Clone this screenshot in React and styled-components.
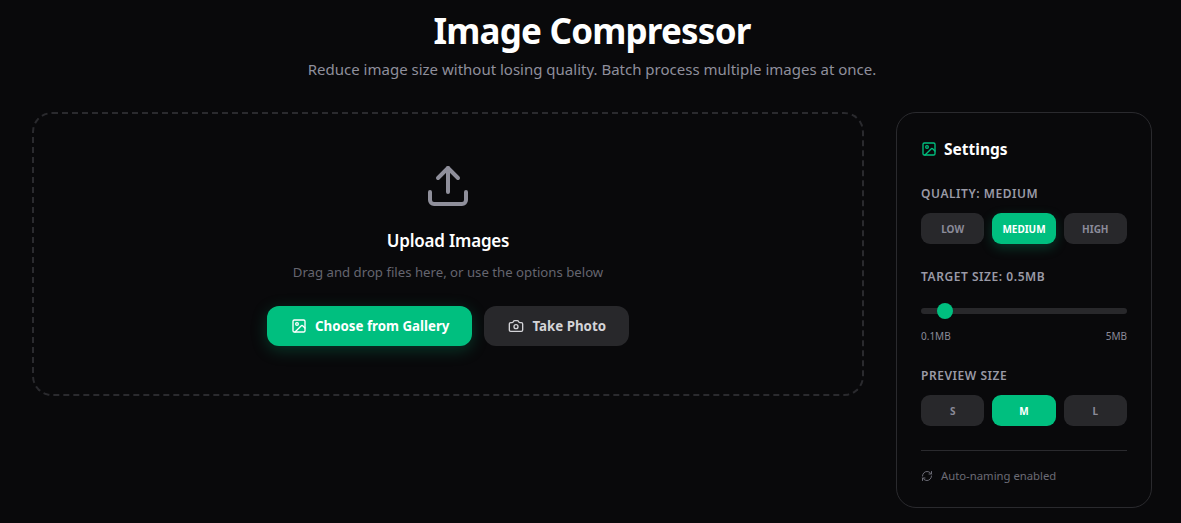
import styled, { createGlobalStyle } from "styled-components";
import { Camera, Image, RefreshCw, Upload } from "lucide-react";

const GREEN = "#00bf7f";

const GlobalStyle = createGlobalStyle`
  html, body {
    margin: 0;
    background: #09090b;
    color: #fff;
    font-family: "Noto Sans", "Open Sans", sans-serif;
  }

  * {
    box-sizing: border-box;
  }
`;

const Page = styled.div`
  width: 1181px;
  height: 523px;
  overflow: hidden;
  padding: 8px 29px 0 32px;
`;

const Header = styled.header`
  text-align: center;
  height: 104px;

  h1 {
    margin: 0;
    font-size: 35px;
    line-height: 46px;
    font-weight: 700;
    letter-spacing: -0.8px;
  }

  p {
    margin: 3px 0 0;
    font-size: 15px;
    line-height: 24px;
    color: #8f8f9c;
  }
`;

const Columns = styled.main`
  display: grid;
  grid-template-columns: 1fr 256px;
  gap: 32px;
  align-items: start;
`;

const DropZone = styled.section`
  height: 284px;
  border: 2px dashed #2a2a2e;
  border-radius: 20px;
  padding-top: 48px;
  display: flex;
  flex-direction: column;
  align-items: center;
  color: #8f8f9b;

  h2 {
    margin: 17px 0 0;
    font-size: 17px;
    line-height: 28px;
    font-weight: 600;
    letter-spacing: -0.2px;
    color: #fff;
  }

  p {
    margin: 7px 0 0;
    font-size: 13.2px;
    line-height: 20px;
    color: #65656f;
  }
`;

const Actions = styled.div`
  display: flex;
  gap: 12px;
  margin-top: 24px;
`;

const ActionButton = styled.button`
  height: 40px;
  display: flex;
  align-items: center;
  gap: 8px;
  padding: 0 23px 0 24px;
  border: none;
  border-radius: 12px;
  font-family: inherit;
  font-size: 13.3px;
  font-weight: 700;
  background: ${(p) => (p.$primary ? GREEN : "#28282b")};
  color: ${(p) => (p.$primary ? "#fff" : "#d4d4d8")};
  box-shadow: ${(p) => (p.$primary ? "0 4px 16px rgba(0, 191, 127, 0.25)" : "none")};
`;

const Panel = styled.aside`
  height: 396px;
  border: 1px solid #2a2a2e;
  border-radius: 20px;
  padding: 24px;
  display: flex;
  flex-direction: column;
`;

const PanelTitle = styled.h3`
  margin: 0;
  display: flex;
  align-items: center;
  gap: 7px;
  font-size: 15.5px;
  line-height: 24px;
  font-weight: 700;
  color: #fff;

  svg {
    color: ${GREEN};
  }
`;

const Label = styled.div`
  margin-top: ${(p) => p.$top}px;
  font-size: 12px;
  line-height: 16px;
  font-weight: 600;
  letter-spacing: 0.55px;
  text-transform: uppercase;
  color: #9a9aa6;
`;

const Options = styled.div`
  display: grid;
  grid-template-columns: repeat(3, 1fr);
  gap: 8px;
  margin-top: 11px;
`;

const Option = styled.button`
  height: 31px;
  padding: 0;
  border: none;
  border-radius: 9px;
  font-family: inherit;
  font-size: 10px;
  font-weight: 700;
  background: ${(p) => (p.$active ? GREEN : "#28282b")};
  color: ${(p) => (p.$active ? "#fff" : "#8b8b99")};
  box-shadow: ${(p) => (p.$glow ? "0 4px 12px rgba(0, 191, 127, 0.25)" : "none")};
`;

const Range = styled.input`
  display: block;
  appearance: none;
  width: 100%;
  height: 6px;
  margin: 23px 0 0;
  border-radius: 3px;
  background: #28282b;

  &::-webkit-slider-thumb {
    appearance: none;
    width: 16px;
    height: 16px;
    border-radius: 50%;
    background: ${GREEN};
  }
`;

const RangeEnds = styled.div`
  display: flex;
  justify-content: space-between;
  margin-top: 14px;
  font-size: 10px;
  line-height: 16px;
  color: #8b8b99;
`;

const Footer = styled.div`
  margin-top: 24px;
  padding-top: 16px;
  border-top: 1px solid #2a2a2e;
  display: flex;
  align-items: center;
  gap: 8px;
  font-size: 11.3px;
  line-height: 18px;
  color: #6b6b75;
`;

const App = () => {
  return (
    <Page>
      <GlobalStyle />
      <Header>
        <h1>Image Compressor</h1>
        <p>Reduce image size without losing quality. Batch process multiple images at once.</p>
      </Header>
      <Columns>
        <DropZone>
          <Upload size={48} strokeWidth={2} />
          <h2>Upload Images</h2>
          <p>Drag and drop files here, or use the options below</p>
          <Actions>
            <ActionButton $primary>
              <Image size={16} />
              Choose from Gallery
            </ActionButton>
            <ActionButton>
              <Camera size={16} />
              Take Photo
            </ActionButton>
          </Actions>
        </DropZone>
        <Panel>
          <PanelTitle>
            <Image size={16} />
            Settings
          </PanelTitle>
          <Label $top={25}>Quality: Medium</Label>
          <Options>
            <Option>LOW</Option>
            <Option $active $glow>MEDIUM</Option>
            <Option>HIGH</Option>
          </Options>
          <Label $top={25}>Target Size: 0.5MB</Label>
          <Range type="range" min={0.1} max={5} step={0.1} defaultValue={0.5} />
          <RangeEnds>
            <span>0.1MB</span>
            <span>5MB</span>
          </RangeEnds>
          <Label $top={24}>Preview Size</Label>
          <Options>
            <Option>S</Option>
            <Option $active>M</Option>
            <Option>L</Option>
          </Options>
          <Footer>
            <RefreshCw size={12} />
            Auto-naming enabled
          </Footer>
        </Panel>
      </Columns>
    </Page>
  );
};

export default App;
